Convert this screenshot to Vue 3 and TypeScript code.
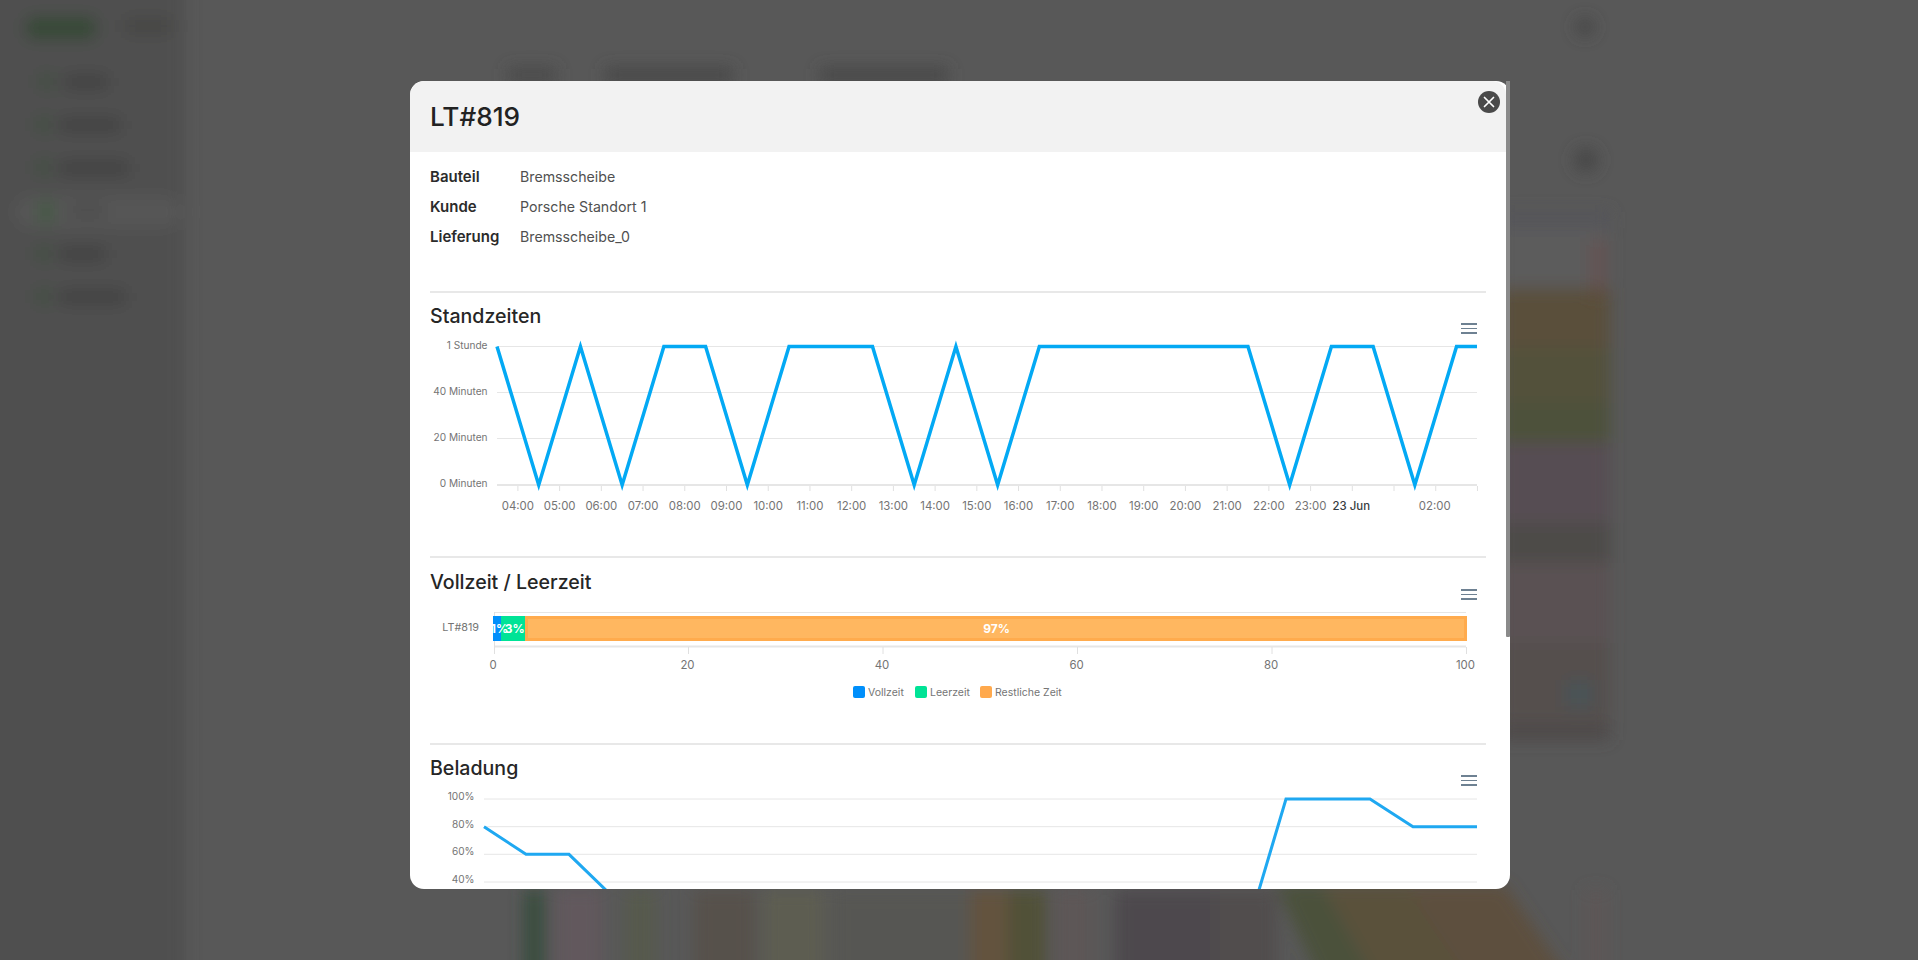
<script setup lang="ts">
const grid1 = [346.5, 392.5, 438.5]
const yLabels1 = [
  { t: '1 Stunde', y: 348.5 },
  { t: '40 Minuten', y: 394.5 },
  { t: '20 Minuten', y: 440.5 },
  { t: '0 Minuten', y: 486.5 },
]
const step = 41.72
const highLow = [1, 0, 1, 0, 1, 1, 0, 1, 1, 1, 0, 1, 0, 1, 1, 1, 1, 1, 1, 0, 1, 1, 0, 1]
const standPoints = [
  ...highLow.map((h, i) => `${497 + i * step},${h ? 346.5 : 485}`),
  '1477,346.5',
].join(' ')
const hours = ['04:00', '05:00', '06:00', '07:00', '08:00', '09:00', '10:00', '11:00', '12:00', '13:00', '14:00', '15:00', '16:00', '17:00', '18:00', '19:00', '20:00', '21:00', '22:00', '23:00']
const xTicks = Array.from({ length: 24 }, (_, k) => 517.9 + k * step)
const xLabels = [
  ...hours.map((t, k) => ({ t, x: 517.9 + k * step, strong: false })),
  { t: '23 Jun', x: 517.9 + 20 * step - 1, strong: true },
  { t: '02:00', x: 517.9 + 22 * step - 1, strong: false },
]
const barTicks = [0, 20, 40, 60, 80, 100].map((v) => ({ v, x: 494 + v * 9.725 }))
const legend = [
  { t: 'Vollzeit', c: '#008ffb', x: 853, tx: 868 },
  { t: 'Leerzeit', c: '#00e396', x: 915, tx: 930 },
  { t: 'Restliche Zeit', c: '#ffa94d', x: 980, tx: 995 },
]
const grid3 = [
  { t: '100%', y: 799 },
  { t: '80%', y: 826.7 },
  { t: '60%', y: 854.3 },
  { t: '40%', y: 882 },
]
const loadPoints = '484,826.7 526,854.3 569,854.3 612,896 1256,900 1286,799 1370,799 1413,826.7 1477,826.7'
const sidebar = [
  { y: 82, x: 45, tx: 65, tw: 42 },
  { y: 125, x: 42, tx: 60, tw: 60 },
  { y: 168, x: 42, tx: 60, tw: 68 },
  { y: 254, x: 42, tx: 60, tw: 45 },
  { y: 297, x: 42, tx: 60, tw: 65 },
]
const strip = [
  { y: 288, h: 60, c: '#5c4e36' },
  { y: 348, h: 55, c: '#524f32' },
  { y: 403, h: 40, c: '#4a4f32' },
  { y: 443, h: 80, c: '#574b52' },
  { y: 523, h: 40, c: '#4b4846' },
  { y: 563, h: 80, c: '#5a4f52' },
  { y: 643, h: 80, c: '#544e4a' },
  { y: 724, h: 16, c: '#4c4745' },
]
const bottom = [
  { x: 524, w: 20, c: '#2f4a38' },
  { x: 556, w: 46, c: '#655860' },
  { x: 625, w: 31, c: '#565c4c' },
  { x: 694, w: 61, c: '#555048' },
  { x: 763, w: 61, c: '#5e6050' },
  { x: 832, w: 138, c: '#555553' },
  { x: 970, w: 38, c: '#66523a' },
  { x: 1008, w: 38, c: '#505030' },
  { x: 1054, w: 38, c: '#605555' },
  { x: 1115, w: 100, c: '#4b464a' },
  { x: 1215, w: 61, c: '#504a4c' },
  { x: 1586, w: 20, c: '#5f5555' },
]
</script>

<template>
  <div class="page">
    <svg class="backdrop" width="1918" height="960" viewBox="0 0 1918 960" aria-hidden="true">
      <defs>
        <filter id="soft" x="-5%" y="-5%" width="110%" height="110%">
          <feGaussianBlur stdDeviation="8" />
        </filter>
      </defs>
      <rect width="1918" height="960" fill="#585858" />
      <g filter="url(#soft)">
        <rect x="-20" y="-20" width="205" height="1000" fill="#4f4f4f" />
        <rect x="26" y="17" width="70" height="22" rx="6" fill="#344a34" />
        <rect x="125" y="19" width="46" height="14" fill="#444442" />
        <rect x="16" y="197" width="165" height="30" rx="15" fill="#575757" />
        <rect x="38" y="202" width="16" height="20" fill="#425c42" />
        <rect x="70" y="206" width="35" height="10" fill="#4a4a4a" />
        <g v-for="s in sidebar" :key="s.y">
          <rect :x="s.x - 6" :y="s.y - 8" width="15" height="15" fill="#3f4f3f" />
          <rect :x="s.tx" :y="s.y - 6" :width="s.tw" height="12" fill="#3e3e3d" />
        </g>
        <rect x="508" y="68" width="48" height="14" fill="#484848" />
        <rect x="605" y="68" width="128" height="14" fill="#464646" />
        <rect x="820" y="68" width="128" height="14" fill="#464646" />
        <circle cx="1585" cy="27" r="9" fill="#444" />
        <circle cx="1586" cy="160" r="12" fill="#464646" />
        <rect x="1500" y="212" width="110" height="16" fill="#54555a" />
        <rect x="1500" y="228" width="108" height="62" fill="#5b5b5b" />
        <rect x="1590" y="240" width="16" height="60" fill="#655252" />
        <g class="tinted">
          <rect
            v-for="r in strip"
            :key="r.y"
            x="1500"
            :y="r.y"
            width="110"
            :height="r.h"
            :fill="r.c"
          />
          <rect x="1566" y="680" width="26" height="28" fill="#465357" />
          <rect
            v-for="r in bottom"
            :key="r.x"
            :x="r.x"
            y="890"
            :width="r.w"
            height="90"
            :fill="r.c"
          />
          <polygon points="1276,885 1322,885 1375,980 1320,980" fill="#485034" />
          <polygon points="1322,885 1406,885 1470,980 1375,980" fill="#5a5032" />
          <polygon points="1406,885 1505,885 1570,980 1470,980" fill="#5e4e38" />
        </g>
      </g>
    </svg>

    <div class="modal">
      <div class="modal-clip">
        <header class="modal-head">
          <h1>LT#819</h1>
        </header>
        <div class="modal-body">
          <dl class="details">
            <dt>Bauteil</dt>
            <dd>Bremsscheibe</dd>
            <dt>Kunde</dt>
            <dd>Porsche Standort 1</dd>
            <dt>Lieferung</dt>
            <dd>Bremsscheibe_0</dd>
          </dl>

          <section class="block">
            <h2>Standzeiten</h2>
            <span class="chart-menu"><i></i><i></i><i></i></span>
            <svg class="chart" width="1056" height="228" viewBox="430 328 1056 228">
              <line v-for="y in grid1" :key="y" x1="497" x2="1477" :y1="y" :y2="y" class="grid" />
              <line x1="497" x2="1477" y1="485" y2="485" class="axis" />
              <line v-for="x in xTicks" :key="x" :x1="x" :x2="x" y1="486" y2="491" class="tick" />
              <text v-for="l in yLabels1" :key="l.t" x="487.5" :y="l.y" text-anchor="end" class="lbl ylbl">{{ l.t }}</text>
              <text
                v-for="l in xLabels"
                :key="l.t"
                :x="l.x"
                y="510"
                text-anchor="middle"
                class="lbl xlbl"
                :class="{ strong: l.strong }"
              >{{ l.t }}</text>
              <polyline :points="standPoints" class="stand" />
            </svg>
          </section>

          <section class="block mid">
            <h2>Vollzeit / Leerzeit</h2>
            <span class="chart-menu"><i></i><i></i><i></i></span>
            <svg class="chart" width="1056" height="149" viewBox="430 594 1056 149">
              <defs>
                <clipPath id="barclip"><rect x="491.5" y="612" width="990" height="35" /></clipPath>
              </defs>
              <line x1="494" x2="1466" y1="612.5" y2="612.5" class="grid" />
              <line x1="494" x2="1466" y1="646.5" y2="646.5" class="axis" />
              <line x1="494.5" x2="494.5" y1="612" y2="654" class="tick" />
              <line v-for="t in barTicks.slice(1)" :key="t.v" :x1="t.x" :x2="t.x" y1="647" y2="654" class="tick" />
              <rect x="493" y="616" width="8" height="25" fill="#008ffb" />
              <rect x="501" y="616" width="24.5" height="25" fill="#00e396" />
              <rect x="526.5" y="617.5" width="939" height="22" fill="#ffb760" stroke="#ffab4d" stroke-width="3" />
              <g clip-path="url(#barclip)">
                <text x="499.5" y="633" text-anchor="middle" class="pct">1%</text>
                <text x="514.8" y="633" text-anchor="middle" class="pct">3%</text>
                <text x="996.5" y="633" text-anchor="middle" class="pct">97%</text>
              </g>
              <text x="479" y="631" text-anchor="end" class="lbl cat">LT#819</text>
              <text v-for="t in barTicks" :key="t.v" :x="t.x - 1" y="669" text-anchor="middle" class="lbl xlbl">{{ t.v }}</text>
              <g v-for="l in legend" :key="l.t">
                <rect :x="l.x" y="686" width="12" height="12" rx="2" :fill="l.c" />
                <text :x="l.tx" y="696" class="lbl leg">{{ l.t }}</text>
              </g>
            </svg>
          </section>

          <section class="block">
            <h2>Beladung</h2>
            <span class="chart-menu"><i></i><i></i><i></i></span>
            <svg class="chart" width="1056" height="120" viewBox="430 780 1056 120">
              <line v-for="g in grid3" :key="g.t" x1="484" x2="1477" :y1="g.y" :y2="g.y" class="grid" />
              <text v-for="g in grid3" :key="g.t + 'l'" x="474.5" :y="g.y + 1" text-anchor="end" class="lbl ylbl">{{ g.t }}</text>
              <polyline :points="loadPoints" class="load" />
            </svg>
          </section>
        </div>
      </div>
      <button class="close" type="button" aria-label="Schließen">
        <svg width="12" height="12" viewBox="0 0 12 12"><path d="M1.5 1.5 10.5 10.5M10.5 1.5 1.5 10.5" stroke="#fff" stroke-width="1.7" stroke-linecap="round" /></svg>
      </button>
      <span class="thumb"></span>
    </div>
  </div>
</template>

<style scoped>
.page {
  position: relative;
  width: 1918px;
  height: 960px;
  overflow: hidden;
  display: flex;
  justify-content: flex-start;
  align-items: flex-start;
  padding: 81px 0 0 410px;
  box-sizing: border-box;
  font-family: Inter, 'Liberation Sans', sans-serif;
}
.backdrop {
  position: absolute;
  left: 0;
  top: 0;
}
.tinted {
  opacity: 0.8;
}
.modal {
  position: relative;
  width: 1100px;
  height: 808px;
  flex: none;
}
.modal-clip {
  height: 100%;
  background: #fff;
  border-radius: 14px;
  overflow: hidden;
}
.modal-head {
  height: 71px;
  margin-right: 4px;
  background: #f2f2f2;
  border-radius: 14px 14px 0 0;
  display: flex;
  align-items: center;
  padding-left: 20px;
}
.modal-head h1 {
  margin: 0;
  font-size: 26.2px;
  font-weight: 450;
  color: #222;
}
.modal-body {
  padding: 0 24px 0 20px;
}
.details {
  display: grid;
  grid-template-columns: 90px 1fr;
  grid-auto-rows: 30px;
  align-items: center;
  margin: 9px 0 40px;
  font-size: 14.2px;
}
.details dt {
  font-size: 15px;
  font-weight: 600;
  color: #2b2b2b;
}
.details dd {
  margin: 0;
  color: #505050;
}
.block {
  position: relative;
  border-top: 2px solid #e8e8e8;
  padding-top: 11px;
}
.block h2 {
  margin: 0;
  height: 24px;
  line-height: 24px;
  font-size: 19.6px;
  font-weight: 450;
  color: #262626;
}
.mid {
  padding-top: 12px;
}
.chart {
  display: block;
}
.chart-menu {
  position: absolute;
  right: 9px;
  top: 30px;
  width: 16px;
  display: flex;
  flex-direction: column;
  gap: 3px;
}
.mid .chart-menu {
  top: 31px;
}
.chart-menu i {
  display: block;
  height: 1.5px;
  background: #6e8192;
}
.grid {
  stroke: #e6e6e6;
  stroke-width: 1;
}
.axis {
  stroke: #e6e6e6;
  stroke-width: 2;
}
.tick {
  stroke: #e0e0e0;
  stroke-width: 1;
}
.lbl {
  font-family: Inter, 'Liberation Sans', sans-serif;
  fill: #747474;
}
.ylbl {
  font-size: 10.1px;
}
.cat {
  font-size: 10.8px;
}
.leg {
  font-size: 10.5px;
}
.xlbl {
  font-size: 11.4px;
}
.strong {
  fill: #373d3f;
  font-weight: 500;
  font-size: 11.4px;
}
.pct {
  font-family: Inter, 'Liberation Sans', sans-serif;
  font-size: 12px;
  font-weight: 700;
  fill: #fff;
}
.stand {
  fill: none;
  stroke: #03a9f4;
  stroke-width: 3.5;
  stroke-linejoin: miter;
}
.load {
  fill: none;
  stroke: #1fa8f1;
  stroke-width: 3;
}
.close {
  position: absolute;
  right: 10px;
  top: 10px;
  width: 22px;
  height: 22px;
  border: 0;
  padding: 0;
  border-radius: 50%;
  background: #4a4a4a;
  display: flex;
  align-items: center;
  justify-content: center;
}
.thumb {
  position: absolute;
  right: 0;
  top: 0;
  width: 4px;
  height: 556px;
  background: #8a8a8a;
  border-radius: 0 0 1px 1px;
}
</style>
